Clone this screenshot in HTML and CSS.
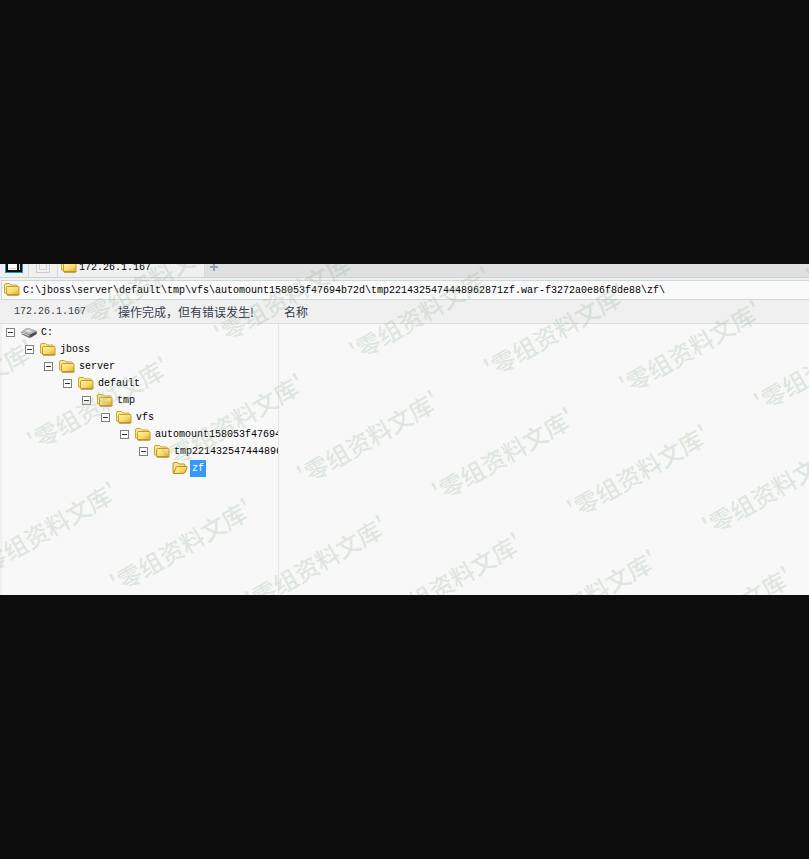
FILE: index.html
```html
<!DOCTYPE html>
<html lang="zh-CN">
<head>
<meta charset="utf-8">
<title>172.26.1.167</title>
<link rel="stylesheet" href="styles.css">
</head>
<body>
<svg class="defs" aria-hidden="true">
  <defs>
    <linearGradient id="gold" x1="0" y1="0" x2="1" y2="1">
      <stop offset="0" stop-color="#fff3a4"/><stop offset=".55" stop-color="#f6dc6c"/><stop offset="1" stop-color="#dcaa2c"/>
    </linearGradient>
    <symbol id="folder" viewBox="0 0 16 14">
      <path d="M.5 10V2Q.5 .5 2 .5H5.500L7 2H12.500Q13.500 2 13.500 3.500V10Z" fill="#fbe68a" stroke="#cfa63c"/>
      <path d="M2.500 11.500V4.500Q2.500 3.500 3.500 3.500H14Q15 3.500 15 4.500V10.500Q15 11.500 14 11.500Z" fill="url(#gold)" stroke="#c79a2a"/>
      <path d="M3 12.300H14.500L15.500 11" fill="none" stroke="#a87810" stroke-width=".8"/>
    </symbol>
    <symbol id="folder-open" viewBox="0 0 16 14">
      <path d="M1 10.500V2Q1 .5 2.500 .5H5.500L7 2H12Q13 2 13 3.500V9L2 11.500Z" fill="#fbe58a" stroke="#b98a1c"/>
      <path d="M1.500 11.500L4 5.500Q4.300 4.500 5.500 4.500H14Q15.500 4.500 15 5.500L13 10.500Q12.500 11.500 11.500 11.500Z" fill="url(#gold)" stroke="#b98a1c"/>
    </symbol>
    <symbol id="drive" viewBox="0 0 16 12">
      <path d="M0 5L5 1.500Q6 1 7.500 1L15.500 4V7L10 10.500L8 11L1 7.500Z" fill="#777"/>
      <path d="M0 5L5 1.500Q6 1 7.500 1L15.500 4L9 7.500Z" fill="#b9b9b9"/>
      <path d="M4 4L7 2.500L11 4L8 5.500Z" fill="#e4e4e4"/>
      <path d="M9 8L15.500 4.500V7L9.500 10.500Z" fill="#4c4c4c"/>
      <path d="M1 6L8 8.500" stroke="#ddd"/>
    </symbol>
    <text id="mark" class="mark" text-anchor="end" transform="rotate(-30)">'零组资料文库'</text>
  </defs>
</svg>

<main class="window">
  <nav class="tabs">
    <button class="tab tool" type="button" aria-label="窗口">
      <svg width="18" height="18" viewBox="0 0 18 18"><path d="M0 0H18V15H0Z" fill="#169bb5"/><path d="M1 0H17V14H1Z" fill="#111"/><path d="M3 1H12V12H3Z" fill="#fff"/><path d="M14 1H15V12H14Z" fill="#ddd"/><path d="M4 10H11V11H4Z" fill="#ccc"/></svg>
    </button>
    <button class="tab tool" type="button" aria-label="选择">
      <svg width="16" height="16" viewBox="0 0 16 16"><path d="M1.500 .5H14.500V13.500H1.500Z" fill="none" stroke="#bdbdbd" stroke-dasharray="2 1"/><path d="M4 10.500H12M4.500 4V11M11.500 4V11" stroke="#d4d4d4"/></svg>
    </button>
    <button class="tab current" type="button"><svg width="16" height="14"><use href="#folder"/></svg><span>172.26.1.167</span></button>
    <button class="tab add" type="button" aria-label="新建">
      <svg width="8" height="8" viewBox="0 0 8 8"><path d="M4 0V8M0 4H8" stroke="#91a3b6" stroke-width="2"/></svg>
    </button>
  </nav>

  <form class="address">
    <svg width="16" height="14"><use href="#folder"/></svg>
    <input class="path" type="text" aria-label="路径" value="C:\jboss\server\default\tmp\vfs\automount158053f47694b72d\tmp2214325474448962871zf.war-f3272a0e86f8de88\zf\">
  </form>

  <header class="heading">
    <div class="state"><span class="host">172.26.1.167</span><span>操作完成，但有错误发生!</span></div>
    <span class="name">名称</span>
  </header>

  <div class="content">
    <aside class="tree">
      <div class="row"><button class="toggle" type="button" aria-label="折叠"></button><svg width="16" height="12"><use href="#drive"/></svg><span class="label">C:</span></div>
      <ul><li><div class="row"><button class="toggle" type="button" aria-label="折叠"></button><svg width="16" height="14"><use href="#folder"/></svg><span class="label">jboss</span></div>
      <ul><li><div class="row"><button class="toggle" type="button" aria-label="折叠"></button><svg width="16" height="14"><use href="#folder"/></svg><span class="label">server</span></div>
      <ul><li><div class="row"><button class="toggle" type="button" aria-label="折叠"></button><svg width="16" height="14"><use href="#folder"/></svg><span class="label">default</span></div>
      <ul><li><div class="row"><button class="toggle" type="button" aria-label="折叠"></button><svg width="16" height="14"><use href="#folder"/></svg><span class="label">tmp</span></div>
      <ul><li><div class="row"><button class="toggle" type="button" aria-label="折叠"></button><svg width="16" height="14"><use href="#folder"/></svg><span class="label">vfs</span></div>
      <ul><li><div class="row"><button class="toggle" type="button" aria-label="折叠"></button><svg width="16" height="14"><use href="#folder"/></svg><span class="label">automount158053f47694b72d</span></div>
      <ul><li><div class="row"><button class="toggle" type="button" aria-label="折叠"></button><svg width="16" height="14"><use href="#folder"/></svg><span class="label">tmp2214325474448962871zf.war-f3272a0e86f8de88</span></div>
      <ul><li><div class="row leaf"><svg width="16" height="14"><use href="#folder-open"/></svg><span class="label selected">zf</span></div></li></ul>
      </li></ul></li></ul></li></ul></li></ul></li></ul></li></ul></li></ul>
    </aside>
    <section class="files" aria-label="文件"></section>
  </div>

  <svg class="watermark" aria-hidden="true">
    <use href="#mark" x="951" y="-55"/>
    <use href="#mark" x="224" y="-15"/><use href="#mark" x="359" y="2"/><use href="#mark" x="494" y="19"/><use href="#mark" x="629" y="36"/><use href="#mark" x="764" y="53"/><use href="#mark" x="899" y="70"/>
    <use href="#mark" x="37" y="92"/><use href="#mark" x="172" y="109"/><use href="#mark" x="307" y="126"/><use href="#mark" x="442" y="143"/><use href="#mark" x="577" y="160"/><use href="#mark" x="712" y="177"/><use href="#mark" x="847" y="194"/>
    <use href="#mark" x="120" y="234"/><use href="#mark" x="255" y="251"/><use href="#mark" x="390" y="268"/><use href="#mark" x="525" y="285"/><use href="#mark" x="660" y="302"/><use href="#mark" x="795" y="319"/><use href="#mark" x="930" y="336"/>
  </svg>
</main>
</body>
</html>
```
FILE: styles.css
```css
* { box-sizing: border-box; }
body {
  margin: 0;
  min-height: 100vh;
  display: flex;
  flex-direction: column;
  justify-content: center;
  background: #0d0d0d;
  color: #000;
  font: 10px/17px "Liberation Mono", "Noto Sans CJK SC", monospace;
}
svg { flex: none; display: block; }
button, input { font: inherit; color: inherit; padding: 0; border: 0; background: none; }
.defs { position: absolute; width: 0; height: 0; }
.window { position: relative; overflow: hidden; background: #f0f0f0; }

.tabs { display: flex; align-items: flex-end; height: 14px; overflow: hidden; background: #e0e0e0; border-bottom: 1px solid #c9d5d4; }
.tab { display: flex; align-items: center; justify-content: center; flex: none; height: 20px; background: #f0f0f0; border-right: 1px solid #d3dcdc; }
.tool { width: 29px; }
.current { width: 147px; justify-content: flex-start; gap: 2px; padding-left: 3px; }
.add { width: 18px; background: none; border: 0; }

.address { display: flex; align-items: center; gap: 3px; height: 20px; margin: 2px 0 0 1px; padding-left: 2px; background: #fafafa; border: 1px solid #cbd9d8; border-right: 0; }
.path { flex: 1; min-width: 0; height: 18px; outline: 0; }

.heading { display: flex; align-items: center; height: 24px; border-bottom: 1px solid #dedede; color: #343e4c; font-size: 12px; font-family: "Noto Sans CJK SC", sans-serif; }
.state { display: flex; align-items: center; width: 284px; padding-left: 14px; white-space: nowrap; }
.host { width: 104px; font: 10px/17px "Liberation Mono", monospace; }

.content { display: flex; min-height: 271px; background: #f8f8f8; border-left: 2px solid #f0f0f0; }
.tree { width: 277px; flex: none; overflow: hidden; border-right: 1px solid #e5e5e5; }
.tree ul { list-style: none; margin: 0; padding-left: 19px; }
.row { display: flex; align-items: center; height: 17px; padding-left: 4px; white-space: nowrap; }
.toggle { flex: none; width: 9px; height: 9px; margin-right: 6px; border: 1px solid #808080; background: linear-gradient(#333, #333) center / 5px 1px no-repeat #fff; }
.leaf { padding-left: 18px; }
.label { margin-left: 2px; padding: 0 2px; }
.selected { background: #3399ff; color: #fff; }
.files { flex: 1; }

.watermark { position: absolute; inset: 0; width: 100%; height: 100%; pointer-events: none; }
.mark { font: 500 24px "Noto Sans CJK SC", sans-serif; fill: #9db8a0; fill-opacity: .3; }
```
